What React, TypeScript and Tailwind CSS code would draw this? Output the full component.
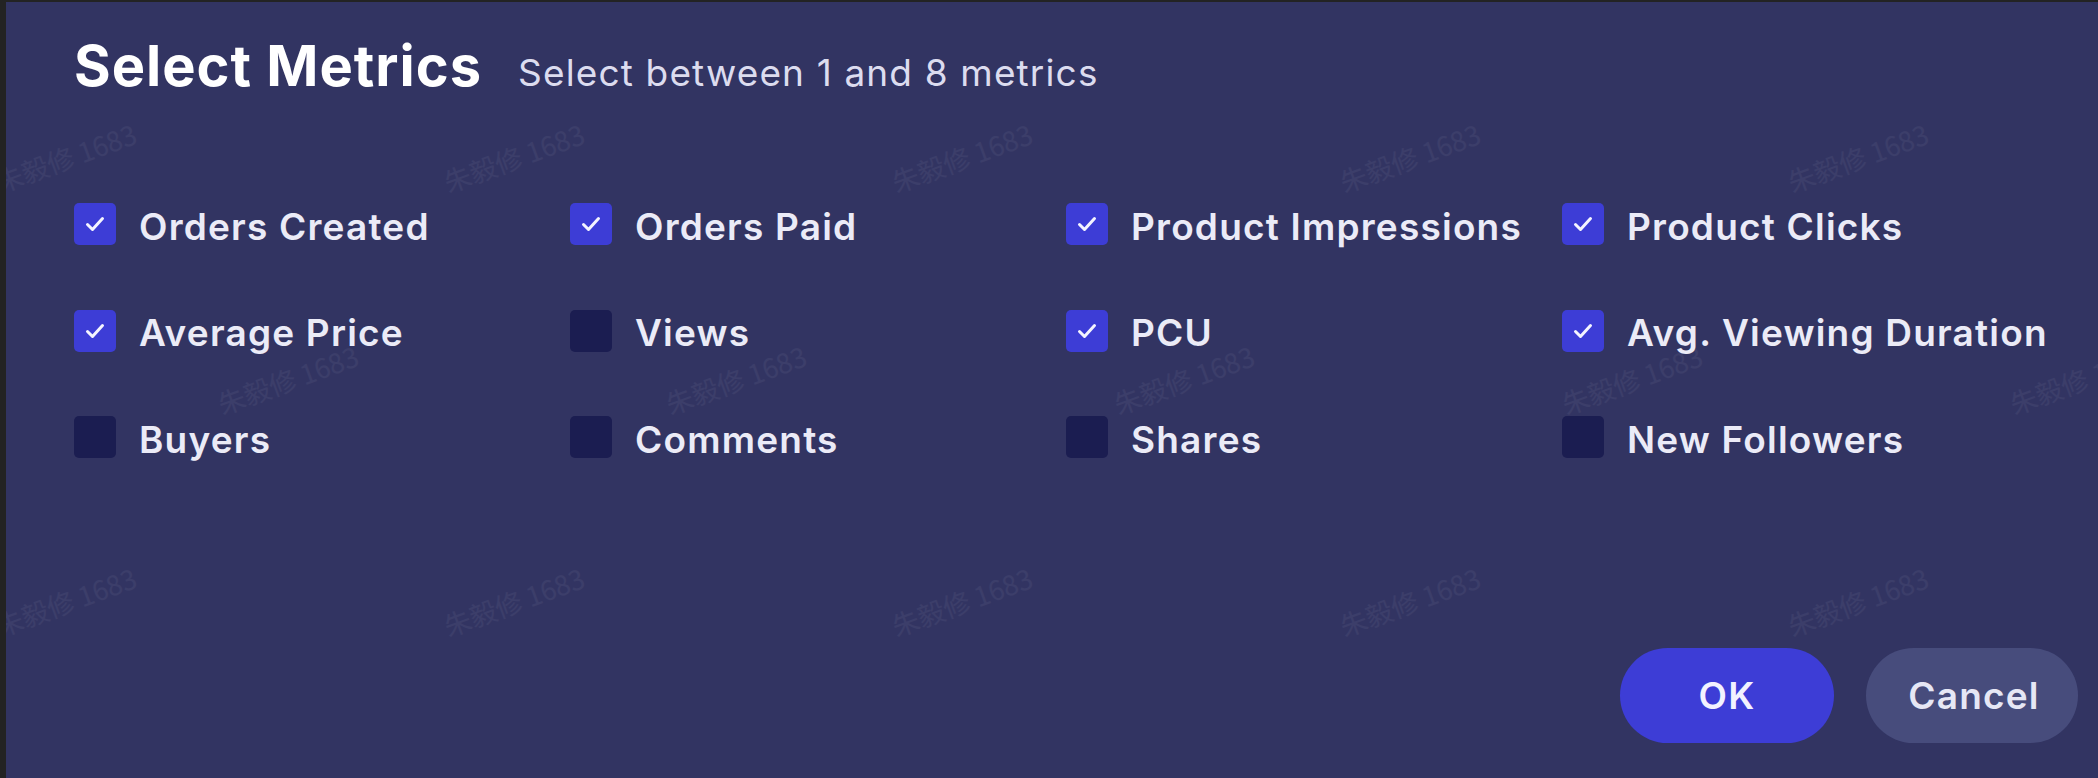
import { useState } from 'react'

type Metric = { label: string; checked: boolean }

const METRICS: Metric[] = [
  { label: 'Orders Created', checked: true },
  { label: 'Orders Paid', checked: true },
  { label: 'Product Impressions', checked: true },
  { label: 'Product Clicks', checked: true },
  { label: 'Average Price', checked: true },
  { label: 'Views', checked: false },
  { label: 'PCU', checked: true },
  { label: 'Avg. Viewing Duration', checked: true },
  { label: 'Buyers', checked: false },
  { label: 'Comments', checked: false },
  { label: 'Shares', checked: false },
  { label: 'New Followers', checked: false },
]

// watermark centres, staggered rows
const MARKS: [number, number][] = [
  [66, 158], [514, 158], [962, 158], [1410, 158], [1858, 158],
  [288, 380], [736, 380], [1184, 380], [1632, 380], [2080, 380],
  [66, 602], [514, 602], [962, 602], [1410, 602], [1858, 602],
]

function Checkbox({ checked }: { checked: boolean }) {
  return (
    <div
      className={
        checked
          ? 'w-[42px] h-[42px] rounded-[5px] bg-[#3d3dd6] flex items-center justify-center shrink-0'
          : 'w-[42px] h-[42px] rounded-[5px] bg-[#1b1d51] shrink-0'
      }
    >
      {checked && (
        <svg width="20" height="16" viewBox="0 0 20 16" fill="none">
          <path
            d="M2.5 8.5 L7.5 13.5 L17.5 2.5"
            stroke="#f4f4ff"
            strokeWidth="3"
            strokeLinecap="round"
            strokeLinejoin="round"
          />
        </svg>
      )}
    </div>
  )
}

export default function App() {
  const [items, setItems] = useState(METRICS)

  function toggle(i: number) {
    setItems((prev) => prev.map((m, j) => (j === i ? { ...m, checked: !m.checked } : m)))
  }

  return (
    <div
      className="w-[2098px] h-[778px] bg-[#232323] pt-[2px] pl-[6px] flex overflow-hidden"
      style={{ fontFamily: 'Inter, "Noto Sans", sans-serif' }}
    >
      <div className="relative flex-1 flex flex-col bg-[#323462] pl-[68px] pr-[20px] pb-[35px] overflow-hidden">
        {/* Watermarks */}
        {MARKS.map(([x, y], i) => (
          <span
            key={i}
            className="absolute pointer-events-none select-none whitespace-nowrap text-[27px] text-white/[0.05] -translate-x-1/2 -translate-y-1/2 -rotate-[20deg]"
            style={{ left: x - 6, top: y - 2, fontFamily: '"Noto Sans CJK SC", sans-serif' }}
          >
            朱毅修 1683
          </span>
        ))}

        {/* Header */}
        <div className="flex items-baseline gap-[36px] mt-[28px] h-[72px]">
          <h1 className="text-[56px] leading-[72px] font-bold tracking-[1px] text-white">Select Metrics</h1>
          <span className="text-[37px] tracking-[1.15px] text-[#dcdcef]">Select between 1 and 8 metrics</span>
        </div>

        {/* Metric grid */}
        <div className="grid grid-cols-[repeat(4,496px)] gap-y-[64.5px] mt-[101px]">
          {items.map((m, i) => (
            <button
              key={m.label}
              onClick={() => toggle(i)}
              className="flex items-center gap-[23px] h-[42px] text-left"
            >
              <Checkbox checked={m.checked} />
              <span className="mt-[5px] text-[37px] leading-[42px] font-semibold tracking-[1.2px] text-[#ebebf7] whitespace-nowrap">
                {m.label}
              </span>
            </button>
          ))}
        </div>

        {/* Actions */}
        <div className="mt-auto flex justify-end gap-[32px]">
          <button className="w-[214px] h-[95px] rounded-full bg-[#3d3dd6] text-[37px] font-semibold tracking-[1.2px] text-[#f2f2ff]">
            OK
          </button>
          <button className="w-[212px] h-[95px] rounded-full bg-[#474c7c] pl-[4px] text-[37px] font-semibold tracking-[1.2px] text-[#e6e7f5]">
            Cancel
          </button>
        </div>
      </div>
    </div>
  )
}
